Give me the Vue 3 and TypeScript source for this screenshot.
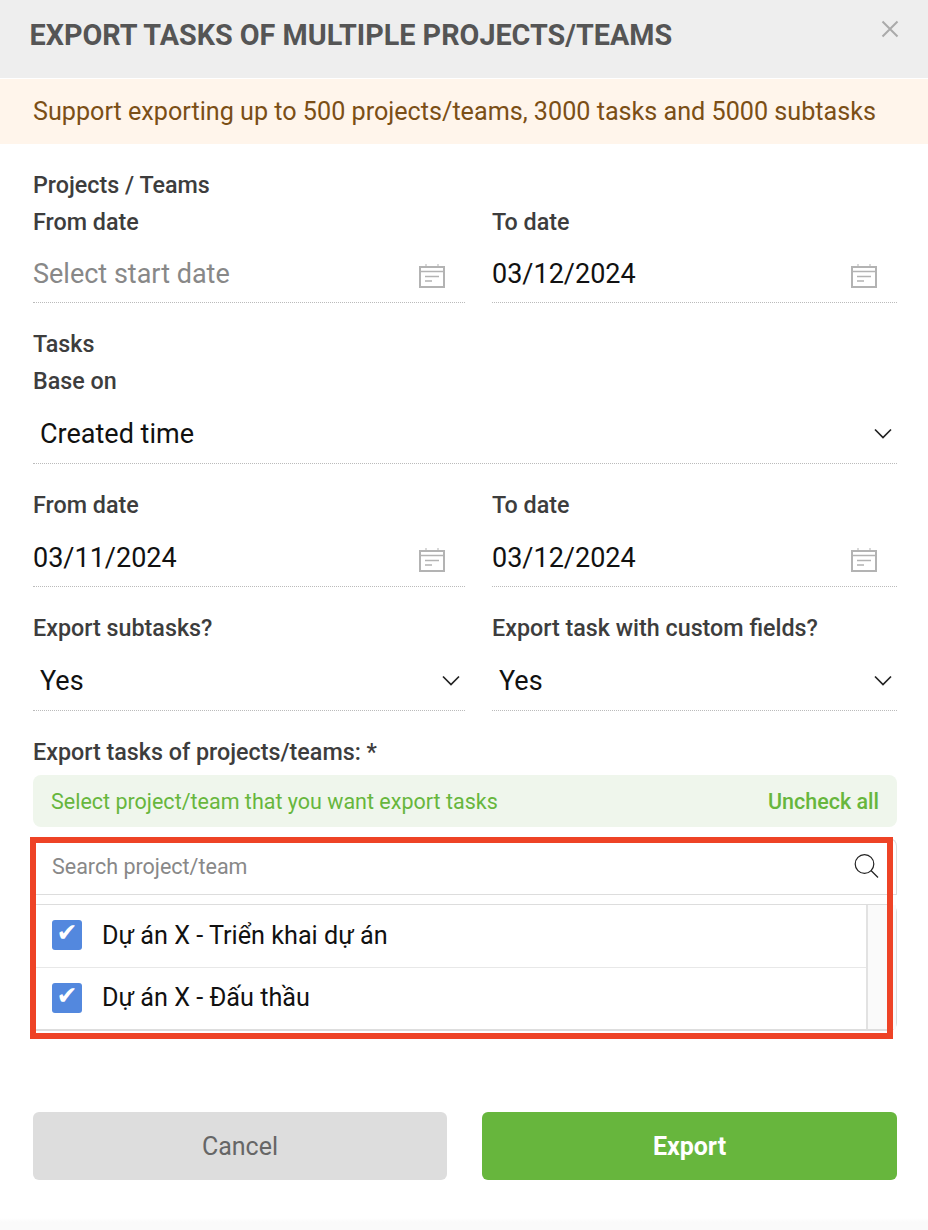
<script setup lang="ts">
interface Item { id: number; name: string }
const items: Item[] = [
  { id: 1, name: 'Dự án X - Triển khai dự án' },
  { id: 2, name: 'Dự án X - Đấu thầu' },
]
</script>

<template>
  <div class="page">
    <header class="head">
      <h1>EXPORT TASKS OF MULTIPLE PROJECTS/TEAMS</h1>
      <svg class="close" width="18" height="18" viewBox="0 0 18 18"><path d="M1.5 1.5 16.5 16.5M16.5 1.5 1.5 16.5" stroke="#aaa" stroke-width="2" fill="none"/></svg>
    </header>
    <div class="banner">Support exporting up to 500 projects/teams, 3000 tasks and 5000 subtasks</div>
    <main class="body">
      <div class="sec">Projects / Teams</div>
      <div class="two r1">
        <div class="field">
          <label>From date</label>
          <div class="input"><span class="ph">Select start date</span>
            <svg class="cal" width="27" height="25" viewBox="0 0 27 25"><g fill="none" stroke="#b3b3b3" stroke-width="2"><rect x="1" y="3" width="24" height="20"/><path d="M1 7.5H25" stroke-width="1.5"/><path d="M7 0V4M19 0V4" stroke-width="1"/><path d="M6 12.5H20M6 17H13" stroke-width="1.5"/></g></svg>
          </div>
        </div>
        <div class="field">
          <label>To date</label>
          <div class="input"><span>03/12/2024</span>
            <svg class="cal" width="27" height="25" viewBox="0 0 27 25"><g fill="none" stroke="#b3b3b3" stroke-width="2"><rect x="1" y="3" width="24" height="20"/><path d="M1 7.5H25" stroke-width="1.5"/><path d="M7 0V4M19 0V4" stroke-width="1"/><path d="M6 12.5H20M6 17H13" stroke-width="1.5"/></g></svg>
          </div>
        </div>
      </div>
      <div class="sec s2">Tasks</div>
      <label class="lb2">Base on</label>
      <div class="select"><span>Created time</span>
        <svg width="18" height="11" viewBox="0 0 18 11"><path d="M1 1.5 9 9.5 17 1.5" stroke="#222" stroke-width="1.7" fill="none"/></svg>
      </div>
      <div class="two r2">
        <div class="field">
          <label>From date</label>
          <div class="input tall"><span>03/11/2024</span>
            <svg class="cal" width="27" height="25" viewBox="0 0 27 25"><g fill="none" stroke="#b3b3b3" stroke-width="2"><rect x="1" y="3" width="24" height="20"/><path d="M1 7.5H25" stroke-width="1.5"/><path d="M7 0V4M19 0V4" stroke-width="1"/><path d="M6 12.5H20M6 17H13" stroke-width="1.5"/></g></svg>
          </div>
        </div>
        <div class="field">
          <label>To date</label>
          <div class="input tall"><span>03/12/2024</span>
            <svg class="cal" width="27" height="25" viewBox="0 0 27 25"><g fill="none" stroke="#b3b3b3" stroke-width="2"><rect x="1" y="3" width="24" height="20"/><path d="M1 7.5H25" stroke-width="1.5"/><path d="M7 0V4M19 0V4" stroke-width="1"/><path d="M6 12.5H20M6 17H13" stroke-width="1.5"/></g></svg>
          </div>
        </div>
      </div>
      <div class="two r3">
        <div class="field">
          <label>Export subtasks?</label>
          <div class="select"><span>Yes</span>
            <svg width="18" height="11" viewBox="0 0 18 11"><path d="M1 1.5 9 9.5 17 1.5" stroke="#222" stroke-width="1.7" fill="none"/></svg>
          </div>
        </div>
        <div class="field">
          <label>Export task with custom fields?</label>
          <div class="select"><span>Yes</span>
            <svg width="18" height="11" viewBox="0 0 18 11"><path d="M1 1.5 9 9.5 17 1.5" stroke="#222" stroke-width="1.7" fill="none"/></svg>
          </div>
        </div>
      </div>
      <label class="lb3">Export tasks of projects/teams: *</label>
      <div class="hint"><span>Select project/team that you want export tasks</span><b>Uncheck all</b></div>
      <div class="picker">
        <div class="search"><span>Search project/team</span>
          <svg width="26" height="26" viewBox="0 0 26 26"><circle cx="11.5" cy="11" r="9.3" fill="none" stroke="#222" stroke-width="1.2"/><path d="M18 17.5 25 24.5" stroke="#222" stroke-width="1.2"/></svg>
        </div>
        <div class="list">
          <div class="rows">
            <div v-for="it in items" :key="it.id" class="row">
              <span class="check">✔</span>
              <span class="name">{{ it.name }}</span>
            </div>
          </div>
          <div class="track"></div>
        </div>
        <div class="mark"></div>
      </div>
      <div class="actions">
        <button class="btn cancel">Cancel</button>
        <button class="btn export">Export</button>
      </div>
    </main>
  </div>
</template>

<style scoped>
.page { width: 928px; height: 1230px; background: linear-gradient(#fff 1218px, #fafafa 1222px); font-family: Roboto, "Noto Sans", sans-serif; color: #333; overflow: hidden; }
.head { height: 78px; background: #eee; display: flex; justify-content: space-between; box-sizing: border-box; padding: 0 29px 0 29.5px; margin-bottom: 1px; }
h1 { margin: 18px 0 0; font-size: 28.75px; line-height: 34px; font-weight: 700; color: #555; letter-spacing: 0; }
.close { margin-top: 20px; }
.banner { height: 65px; box-sizing: border-box; padding: 1px 0 0 33px; background: #fff5eb; color: #7b4f16; font-size: 25.16px; line-height: 64px; }
.body { padding: 0 31px 0 33px; }
label { display: block; font-size: 23.3px; line-height: 24px; padding-bottom: 2px; font-weight: 500; color: #3d3d3d; }
.sec { font-size: 23.3px; line-height: 24px; padding-bottom: 2px; margin-top: 29px; font-weight: 500; color: #3d3d3d; }
.s2 { margin-top: 29px; }
.two { display: grid; grid-template-columns: 432px 405px; column-gap: 27px; }
.r1 { margin-top: 11px; }
.r2 { margin-top: 29px; }
.r3 { margin-top: 29px; }
.lb2 { margin-top: 11px; }
.lb3 { margin-top: 29px; }
.input, .select { display: flex; align-items: flex-end; justify-content: space-between; font-size: 27px; line-height: 30px; color: #111; border-bottom: 1px dotted #bbb; box-sizing: border-box; }
.input { height: 67px; padding: 0 19px 13px 0; }
.tall { height: 68px; }
.ph { color: #888; }
.select { height: 69px; padding: 0 5px 14px 7px; }
.select svg { margin-bottom: 10px; }
.hint { margin-top: 9px; height: 52px; background: #eff6ec; border-radius: 8px; display: flex; align-items: center; justify-content: space-between; padding: 0 18px; color: #67b63d; font-size: 21.5px; }
.hint b { font-weight: 500; }
.picker { position: relative; margin-top: 11px; }
.search { height: 57px; box-sizing: border-box; border: 1px solid #ddd; border-radius: 8px 8px 0 0; border-left: 0; display: flex; align-items: center; justify-content: space-between; padding: 0 17px 0 19px; font-size: 21.5px; color: #888; }
.search svg { margin-top: -1px; }
.list { margin-top: 9px; height: 127px; box-sizing: border-box; border: 1px solid #ddd; border-radius: 0 8px 8px 0; border-left: 0; border-bottom-width: 2px; display: flex; }
.rows { flex: 1; }
.row { height: 63px; box-sizing: border-box; padding: 0 0 2px 19px; display: flex; align-items: center; gap: 20px; border-bottom: 1px solid #e8e8e8; font-size: 25.2px; color: #111; }
.row:last-child { height: 61px; border-bottom: 0; }
.check { width: 30px; height: 30px; border-radius: 3px; background: #5388de; color: #fff; font-size: 25px; line-height: 26px; text-align: center; font-family: "DejaVu Sans", sans-serif; }
.track { width: 28px; background: #fafafa; border-left: 2px solid #e2e2e2; }
.mark { position: absolute; left: -3px; top: -1px; width: 863px; height: 202px; box-sizing: border-box; border: 6px solid #ee4326; pointer-events: none; }
.actions { display: grid; grid-template-columns: 414px 415px; column-gap: 35px; margin-top: 81px; }
.btn { height: 68px; border: 0; border-radius: 6px; font-family: inherit; font-size: 25px; }
.cancel { background: #ddd; color: #666; }
.export { background: #67b63d; color: #fff; font-weight: 700; }
</style>
